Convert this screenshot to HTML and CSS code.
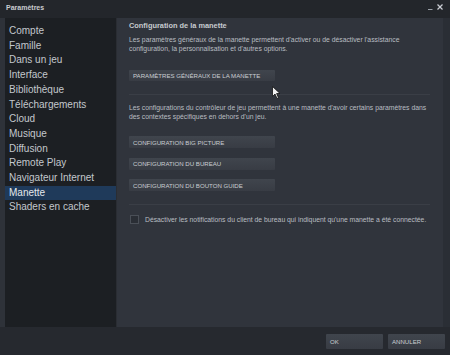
FILE: index.html
```html
<!DOCTYPE html>
<html lang="fr">
<head>
  <meta charset="UTF-8">
  <title>Paramètres</title>
  <link rel="stylesheet" href="styles.css">
</head>
<body>
  <div class="window">
    <div class="titlebar">
      <span class="title">Paramètres</span>
      <span class="controls">
        <svg width="18" height="8" viewBox="0 0 18 8">
          <line x1="1" y1="6.5" x2="5.5" y2="6.5" stroke="#9aa0a8" stroke-width="1"/>
          <line x1="10.5" y1="1.5" x2="15.5" y2="6.5" stroke="#c8ccd2" stroke-width="1.2"/>
          <line x1="15.5" y1="1.5" x2="10.5" y2="6.5" stroke="#c8ccd2" stroke-width="1.2"/>
        </svg>
      </span>
    </div>
    <div class="main">
      <ul class="sidebar">
        <li>Compte</li>
        <li>Famille</li>
        <li>Dans un jeu</li>
        <li>Interface</li>
        <li>Bibliothèque</li>
        <li>Téléchargements</li>
        <li>Cloud</li>
        <li>Musique</li>
        <li>Diffusion</li>
        <li>Remote Play</li>
        <li>Navigateur Internet</li>
        <li class="active">Manette</li>
        <li>Shaders en cache</li>
      </ul>
      <div class="content">
        <h2>Configuration de la manette</h2>
        <p>Les paramètres généraux de la manette permettent d'activer ou de désactiver l'assistance configuration, la personnalisation et d'autres options.</p>
        <button class="btn first">PARAMÈTRES GÉNÉRAUX DE LA MANETTE</button>
        <hr>
        <p>Les configurations du contrôleur de jeu permettent à une manette d'avoir certains paramètres dans des contextes spécifiques en dehors d'un jeu.</p>
        <div class="btn-list">
          <button class="btn">CONFIGURATION BIG PICTURE</button>
          <button class="btn">CONFIGURATION DU BUREAU</button>
          <button class="btn">CONFIGURATION DU BOUTON GUIDE</button>
        </div>
        <hr>
        <label class="check"><span class="box"></span>Désactiver les notifications du client de bureau qui indiquent qu'une manette a été connectée.</label>
        <svg class="cursor" width="9" height="13" viewBox="0 0 9 13">
          <path d="M0.5 0.5 L0.5 10.5 L3 8 L5 12.5 L6.5 11.8 L4.6 7.5 L8 7.5 Z" fill="#f2f2f2" stroke="#111" stroke-width="0.8"/>
        </svg>
      </div>
      <div class="strip"></div>
    </div>
    <div class="footer">
      <button class="btn small">OK</button>
      <button class="btn small">ANNULER</button>
    </div>
  </div>
</body>
</html>
```

FILE: styles.css
```css
body {
  margin: 0;
  background-color: #26292f;
  font-family: "Liberation Sans", Arial, sans-serif;
}
.window {
  width: 450px;
  height: 355px;
  display: flex;
  flex-direction: column;
}
.titlebar {
  height: 18px;
  display: flex;
  align-items: center;
  justify-content: space-between;
  padding: 0 5px 0 6px;
  background-color: #23262b;
}
.title {
  font-size: 7px;
  font-weight: bold;
  color: #c9ccd0;
  margin-top: -3px;
}
.controls svg {
  display: block;
  margin-top: -5px;
}
.main {
  flex: 1;
  display: flex;
  padding-left: 5px;
  background-color: #2e3239;
}
.sidebar {
  width: 112px;
  margin: 0;
  padding: 6px 0 0 0;
  list-style: none;
  background-color: #1c1f23;
  border-right: 1px solid #2a2d33;
  box-sizing: border-box;
}
.sidebar li {
  font-size: 10px;
  line-height: 14.7px;
  padding-left: 4px;
  color: #c3c8cd;
}
.sidebar li.active {
  background-color: #1f3a5a;
  color: #e4e8ec;
}
.content {
  position: relative;
  flex: 1;
  padding: 3px 7px 0 12px;
  background-color: #30343c;
}
.content h2 {
  margin: 0 0 5px 0;
  font-size: 7.4px;
  font-weight: bold;
  color: #c6cacf;
  line-height: 9px;
}
.content p {
  margin: 0;
  font-size: 6.8px;
  line-height: 9px;
  color: #b9bdc2;
}
.btn {
  display: block;
  border: none;
  border-radius: 1px;
  background: linear-gradient(#40454d, #383c44);
  color: #c9cdd2;
  font-family: "Liberation Sans", Arial, sans-serif;
  font-size: 6.1px;
  text-align: left;
  padding: 0 4px;
  height: 12px;
  width: 146px;
}
.btn.first {
  margin-top: 17px;
  height: 11px;
}
.content hr {
  border: none;
  border-top: 1px solid #3a3e46;
  margin: 13px 6px 8px 0;
}
.btn-list {
  margin-top: 15px;
  display: flex;
  flex-direction: column;
  gap: 9.5px;
}
.check {
  display: flex;
  align-items: center;
  font-size: 6.8px;
  color: #b9bdc2;
  margin-top: 10px;
}
.box {
  width: 9px;
  height: 9px;
  border: 1px solid #4a4f57;
  background-color: #2a2e35;
  margin: 0 6px 0 1px;
  box-sizing: border-box;
}
.cursor {
  position: absolute;
  left: 155px;
  top: 68px;
}
.strip {
  width: 7px;
  background-color: #2a2e35;
}
.footer {
  height: 28px;
  display: flex;
  justify-content: flex-end;
  align-items: center;
  gap: 5px;
  padding-right: 5px;
  background-color: #26292f;
}
.btn.small {
  width: 57px;
  height: 15px;
  padding-left: 4px;
}
```
